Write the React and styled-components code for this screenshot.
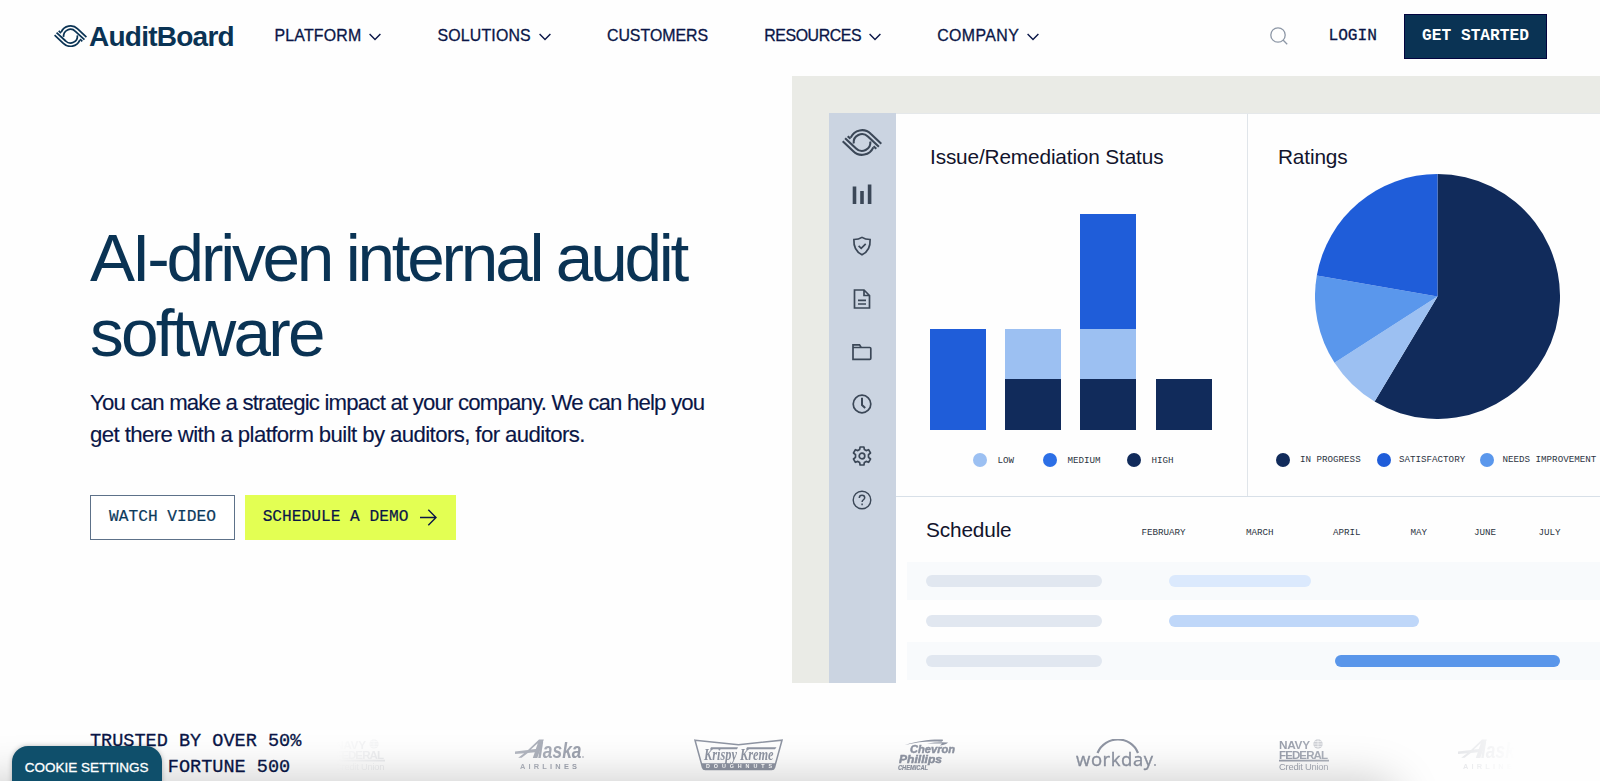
import React from 'react';
import styled, { createGlobalStyle } from 'styled-components';

const SANS = '"Liberation Sans", Arial, sans-serif';
const MONO = '"Liberation Mono", "Courier New", monospace';
const NAVY = '#0a1647';
const TEAL = '#0a3354';

const GlobalStyle = createGlobalStyle`
  *, *::before, *::after { box-sizing: border-box; }
  body {
    margin: 0;
    background: #fefefe;
    font-family: ${SANS};
    color: ${NAVY};
    overflow: hidden;
  }
  svg { display: block; flex: none; }
`;

const Page = styled.div`
  position: relative;
  display: flex;
  flex-direction: column;
  width: 1600px;
  height: 781px;
  overflow: hidden;
`;

/* ---------- Header ---------- */

const Header = styled.header`
  display: flex;
  align-items: center;
  height: 76px;
  padding: 0 53px 4px 54px;
`;

const Brand = styled.a`
  display: flex;
  align-items: center;
  gap: 2px;
  width: 220.5px;
  color: ${TEAL};
`;

const BrandName = styled.span`
  padding-top: 1px;
  font-size: 28px;
  line-height: 32px;
  font-weight: 700;
  letter-spacing: -0.75px;
`;

const Nav = styled.nav`
  display: flex;
  align-items: center;
  gap: 56px;
`;

const NavItem = styled.a`
  display: flex;
  align-items: center;
  gap: 8px;
  font-size: 15.9px;
  line-height: 20px;
  letter-spacing: ${(p) => p.$tracking}px;
  white-space: nowrap;
  -webkit-text-stroke: 0.3px ${NAVY};
`;

const HeaderActions = styled.div`
  display: flex;
  align-items: center;
  margin-left: auto;
`;

const Login = styled.a`
  margin: 0 27px 0 40px;
  font-family: ${MONO};
  font-size: 16.2px;
  -webkit-text-stroke: 0.3px ${NAVY};
`;

const Button = styled.a`
  display: flex;
  align-items: center;
  justify-content: center;
  gap: 12px;
  height: 45px;
  width: ${(p) => p.$width}px;
  font-family: ${MONO};
  font-size: 16.2px;
  white-space: nowrap;
  font-weight: ${(p) => (p.$kind === 'solid' ? 700 : 400)};
  color: ${(p) => ({ solid: '#fff', outline: '#0c3a5c', accent: NAVY })[p.$kind]};
  background: ${(p) => ({ solid: TEAL, outline: '#fff', accent: '#e3ff53' })[p.$kind]};
  border: 1px solid ${(p) => ({ solid: '#03043f', outline: '#5d7189', accent: '#e3ff53' })[p.$kind]};
  -webkit-text-stroke: ${(p) => (p.$kind === 'solid' ? 0 : 0.2)}px currentColor;
`;

/* ---------- Hero ---------- */

const Hero = styled.section`
  display: flex;
  height: 607px;
`;

const HeroCopy = styled.div`
  width: 792px;
  padding: 145px 0 0 90px;
`;

const Title = styled.h1`
  margin: 0;
  font-size: 67.5px;
  line-height: 74.5px;
  font-weight: 400;
  color: ${TEAL};
`;

const TitleLine = styled.span`
  display: block;
  letter-spacing: ${(p) => p.$tracking}px;
  word-spacing: -1px;
`;

const Lead = styled.p`
  margin: 17px 0 0;
  font-size: 22.2px;
  line-height: 31.6px;
  -webkit-text-stroke: 0.15px ${NAVY};
`;

const LeadLine = styled.span`
  display: block;
  letter-spacing: ${(p) => p.$tracking}px;
`;

const ButtonRow = styled.div`
  display: flex;
  gap: 9.5px;
  margin-top: 44.5px;
`;

/* ---------- Product preview ---------- */

const Preview = styled.div`
  flex: 1;
  display: flex;
  padding: 37px 0 0 36.5px;
  background: #eaebe6;
`;

const Sidebar = styled.aside`
  display: flex;
  flex-direction: column;
  align-items: center;
  width: 67.5px;
  padding-top: 15.5px;
  background: #cbd4e1;
  color: #3b4757;
`;

const SideIcon = styled.span`
  display: flex;
  align-items: center;
  justify-content: center;
  height: 20px;
  margin-top: ${(p) => p.$gap}px;
`;

const Main = styled.div`
  flex: 1;
  display: flex;
  flex-direction: column;
  min-width: 0;
  background: #fefefe;
`;

const Charts = styled.div`
  display: flex;
  height: 384px;
  border-top: 1px solid #e5e8ea;
  border-bottom: 1px solid #d8e0e8;
`;

const ChartPanel = styled.div`
  width: ${(p) => p.$width}px;
  padding-top: 31px;
  border-right: ${(p) => (p.$divided ? '1px solid #e0e5ea' : '0')};
`;

const PanelTitle = styled.h2`
  margin: 0 0 0 ${(p) => p.$indent || 0}px;
  font-size: 20.8px;
  line-height: 24px;
  font-weight: 400;
  letter-spacing: -0.15px;
  color: #12142c;
`;

const Bars = styled.div`
  display: flex;
  align-items: flex-end;
  gap: 19.2px;
  height: 216px;
  margin: 44.5px 0 0 34px;
`;

const Bar = styled.div`
  width: 56px;
`;

const Segment = styled.div`
  height: ${(p) => p.$height}px;
  background: ${(p) => p.$color};
`;

const Legend = styled.div`
  display: flex;
  align-items: center;
  height: 14px;
  margin: ${(p) => p.$top}px 0 0 ${(p) => p.$left}px;
`;

const LegendItem = styled.span`
  display: flex;
  align-items: center;
  gap: ${(p) => p.$gap}px;
  width: ${(p) => p.$width}px;
  white-space: nowrap;
  font-family: ${MONO};
  font-size: 9.2px;
  color: #2c3442;

  &::before {
    content: '';
    flex: none;
    width: 14px;
    height: 14px;
    border-radius: 50%;
    background: ${(p) => p.$color};
  }
`;

const PieWrap = styled.div`
  margin: 4.5px 0 0 67.5px;
`;

const Schedule = styled.div`
  flex: 1;
  padding: 19.5px 0 0 11px;
`;

const ScheduleHead = styled.div`
  display: flex;
  align-items: center;
  height: 45.5px;
  padding: 0 0 19px 19px;
`;

const ScheduleTitle = styled(PanelTitle)`
  width: 215.5px;
`;

const Month = styled.span`
  width: ${(p) => p.$width}px;
  padding-top: 5px;
  font-family: ${MONO};
  font-size: 9.2px;
  color: #2c3442;
`;

const ScheduleRow = styled.div`
  display: flex;
  align-items: center;
  height: ${(p) => (p.$shaded ? 38 : 42)}px;
  padding-left: 19px;
  background: ${(p) => (p.$shaded ? '#f8fafc' : 'transparent')};
`;

const Pill = styled.span`
  flex: none;
  width: ${(p) => p.$width}px;
  height: 12px;
  margin-left: ${(p) => p.$offset || 0}px;
  border-radius: 6px;
  background: ${(p) => p.$color};
`;

/* ---------- Customers ---------- */

const Trust = styled.section`
  display: flex;
  flex: 1;
  padding: 45px 0 0 90px;
`;

const TrustText = styled.p`
  width: 235px;
  margin: 0;
  padding-top: 1px;
  font-family: ${MONO};
  font-size: 18.55px;
  line-height: 26px;
  white-space: pre-line;
  -webkit-text-stroke: 0.3px ${NAVY};
`;

const LogoStrip = styled.div`
  width: 1190px;
  height: 53px;
  overflow: hidden;
  color: #8f95a3;
  mask-image: linear-gradient(90deg, transparent 1%, #000 24%, #000 78%, transparent 100%);
`;

const LogoTrack = styled.div`
  display: flex;
  margin-left: -58px;
`;

const LogoSlot = styled.div`
  display: flex;
  flex: none;
  justify-content: center;
  width: 188.7px;
  padding-top: 10.5px;
`;

const BottomShade = styled.div`
  position: absolute;
  left: -30px;
  top: 783px;
  width: 1425px;
  height: 60px;
  border-radius: 20px;
  box-shadow: 0 0 46px 2px rgba(0, 0, 0, 0.22);
`;

const CookieTab = styled.button`
  position: absolute;
  left: 12px;
  top: 746px;
  width: 149.5px;
  height: 44px;
  padding: 0 0 2px;
  border: 0;
  border-radius: 16px 16px 0 0;
  background: #0f4f6b;
  color: #fff;
  font-family: ${SANS};
  font-size: 13.5px;
  white-space: nowrap;
  -webkit-text-stroke: 0.3px #fff;
  box-shadow: 0 0 5px rgba(0, 0, 0, 0.25);
`;

/* ---------- Drawings ---------- */

const Mark = ({ width }) => (
  <svg width={width} height={width * 0.675} viewBox="0 0 40 27" fill="none" stroke="currentColor" strokeWidth="2.1">
    {[0, 180].map((turn) => (
      <g key={turn} transform={`rotate(${turn} 20 13.5)`}>
        <path d="M8.7 8.7A12.3 12.3 0 0 1 28.7 4.8L39.3 14.8" />
        <path d="M11.7 14.5A8.35 8.35 0 0 1 25.9 7.6L36.9 17.8" />
        <path d="M31.500 17.200l2.800 2.600" />
      </g>
    ))}
  </svg>
);

const Chevron = () => (
  <svg width="12" height="8" viewBox="0 0 12 8" fill="none" stroke={NAVY} strokeWidth="1.4" transform="translate(0 1)">
    <path d="M.6 1L6 6.6 11.4 1" />
  </svg>
);

const SearchIcon = () => (
  <svg width="18" height="18" viewBox="0 0 18 18" fill="none" stroke="#8d97a6" strokeWidth="1.3">
    <circle cx="8" cy="8" r="7.2" />
    <path d="M13 13l4.2 4.2" />
  </svg>
);

const Arrow = () => (
  <svg width="17" height="17" viewBox="0 0 17 17" fill="none" stroke={NAVY} strokeWidth="1.4">
    <path d="M0 8.5h16M8.3.8L16 8.5l-7.7 7.7" />
  </svg>
);

const Glyph = ({ children }) => (
  <svg width="20" height="20" viewBox="0 0 20 20" fill="none" stroke="currentColor" strokeWidth="1.7">
    {children}
  </svg>
);

const sideIcons = [
  { gap: 28.5, art: <path d="M2.5 2.5V20M10 7v13M17.6.6V20" strokeWidth="3.6" /> },
  { gap: 32, art: <path d="M10 1.4C7.5 3 4.5 3.5 1.9 3.5c-.4 7 2.3 12.5 8.100 15.300 5.800-2.800 8.500-8.300 8.100-15.300-2.600 0-5.600-.5-8.100-2.100zM6.600 9.800l2.600 2.500 4.500-4.500" /> },
  { gap: 32.5, art: <path d="M2.5 1h9.500l5.500 5.500V19h-15zM12 1v5.500h5.500M6 11.300h8M6 15h8" /> },
  { gap: 33, art: <path d="M1 17.300V2.800h6.500l1.700 2.700h8.600q1 0 1 1v9.800q0 1-1 1zM1 5.500h8.500" /> },
  { gap: 32, art: <><circle cx="10" cy="10" r="8.8" /><path d="M10 3.800V11l3.200 2.900" strokeWidth="2" /></> },
  {
    gap: 32.5,
    art: (
      <>
        <circle cx="10" cy="10" r="2.8" />
        <path
          strokeLinejoin="round"
          d="M8.100 1h3.800l.5 2.600 1.700 1 2.500-.9 1.900 3.300-2 1.700v2.600l2 1.700-1.900 3.300-2.500-.9-1.700 1-.5 2.600H8.100l-.5-2.600-1.700-1-2.500.9L1.500 13l2-1.700V8.700l-2-1.700 1.900-3.300 2.500.9 1.700-1z"
        />
      </>
    ),
  },
  {
    gap: 23.5,
    art: (
      <>
        <circle cx="10" cy="10" r="8.8" strokeWidth="1.4" />
        <path d="M7.300 8c0-1.700 1.200-2.700 2.700-2.700s2.700 1 2.700 2.500c0 2-2.600 2-2.600 4.200M10.100 13.600v1.600" strokeWidth="1.500" />
      </>
    ),
  },
];

const BLUE = '#1f5dd9';
const LIGHT = '#9cc0f2';
const MID = '#5a97ec';
const DARK = '#112b5b';

const bars = [
  [[101, BLUE]],
  [[50.5, LIGHT], [50.5, DARK]],
  [[115, BLUE], [50.5, LIGHT], [50.5, DARK]],
  [[50.5, DARK]],
];

const slices = [
  [0, 210.9, DARK],
  [210.9, 237.2, LIGHT],
  [237.2, 279.9, MID],
  [279.9, 360, BLUE],
];

const onCircle = (deg, r, c) => {
  const a = (deg * Math.PI) / 180;
  return `${(c + r * Math.sin(a)).toFixed(2)} ${(c - r * Math.cos(a)).toFixed(2)}`;
};

const Pie = () => (
  <svg width="245" height="245" viewBox="0 0 245 245">
    {slices.map(([from, to, color]) => (
      <path
        key={color}
        fill={color}
        d={`M122.5 122.5L${onCircle(from, 122.5, 122.5)}A122.5 122.5 0 ${to - from > 180 ? 1 : 0} 1 ${onCircle(to, 122.5, 122.5)}Z`}
      />
    ))}
  </svg>
);

const months = [
  ['FEBRUARY', 104.5],
  ['MARCH', 87],
  ['APRIL', 77.5],
  ['MAY', 63.5],
  ['JUNE', 64.5],
  ['JULY', 30],
];

const tasks = [
  { offset: 66.5, width: 142, color: '#dbe9fd', shaded: true },
  { offset: 66.5, width: 250, color: '#bfd7f9', shaded: false },
  { offset: 232.5, width: 225.5, color: '#5a96ea', shaded: true },
];

const NavyFederal = () => (
  <svg width="52" height="33" viewBox="0 0 52 33" fill="currentColor" fontFamily={SANS}>
    <text x="0" y="9.8" fontSize="11.8" fontWeight="700" textLength="31">NAVY</text>
    <text x="0" y="19.6" fontSize="11.5" fontWeight="700" textLength="49">FEDERAL</text>
    <circle cx="39" cy="5" r="4.7" opacity=".55" />
    <path d="M34.4 5h9.2M35.5 2.5h7M35.5 7.5h7M39 .5v9" stroke="#fff" strokeWidth=".6" />
    <path d="M0 20.8h50v1.800H0z" />
    <text x="0" y="31" fontSize="9.4" textLength="49.5">Credit Union</text>
  </svg>
);

const Alaska = () => (
  <svg width="72" height="33" viewBox="0 0 72 33" fill="currentColor" fontFamily={SANS}>
    <path d="M1 12.500l13-1.600L25 .6h4.800L23.300 19h-4.500l2-5.800-7 .9-6.200 4.600H4.200l6-4.500-9.200.9z M16.800 10.600l5-.7 2-5.700z" fillRule="evenodd" />
    <text x="24" y="18.700" fontSize="21.500" fontWeight="700" fontStyle="italic" textLength="43.500" lengthAdjust="spacingAndGlyphs">laska</text>
    <circle cx="69" cy="18" r=".8" />
    <text x="6" y="30.400" fontSize="7.400" fontWeight="700" textLength="57">AIRLINES</text>
  </svg>
);

const KrispyKreme = () => (
  <svg width="89" height="33" viewBox="0 0 89 33" fill="currentColor">
    <path d="M1 1.200l43.500 4.600L88 1.200 80.500 28.500q-.6 2-2.800 2H11.300q-2.200 0-2.800-2z" fill="none" stroke="currentColor" strokeWidth="1.500" />
    <path d="M7.400 24.200h74.200l-1.800 5.400q-.4 1-1.600 1H10.800q-1.200 0-1.600-1z" />
    <path d="M17 8.300h27l-1 1.900H16zM53 8.300h29.500l-1.500 1.900H52z" />
    <text x="10" y="20.800" fontFamily='"Liberation Serif", serif' fontSize="16.500" fontWeight="700" fontStyle="italic" textLength="69.500" lengthAdjust="spacingAndGlyphs">Krispy Kreme</text>
    <text x="12" y="29.400" fontFamily={SANS} fontSize="5.400" fontWeight="700" fill="#fff" textLength="66">DOUGHNUTS</text>
  </svg>
);

const ChevronPhillips = () => (
  <svg width="60" height="33" viewBox="0 0 60 33" fill="currentColor" fontFamily={SANS} fontWeight="700" fontStyle="italic" stroke="currentColor" strokeWidth=".45">
    <path d="M8 6C19 1.800 35 0 45.500.5q1.500.7-1 2.300C32 2 21 2.800 8 6z" stroke="none" />
    <path d="M30 4.500q12-2 21-1-1.500 2.200-8 3l2-2z" stroke="none" />
    <text x="13" y="14.200" fontSize="10.800" textLength="45" lengthAdjust="spacingAndGlyphs">Chevron</text>
    <text x="2" y="23.900" fontSize="10.800" textLength="43" lengthAdjust="spacingAndGlyphs">Phillips</text>
    <text x="1" y="30.800" fontSize="6.600" textLength="30" lengthAdjust="spacingAndGlyphs" strokeWidth=".2">CHEMICAL</text>
  </svg>
);

const Workday = () => (
  <svg width="80" height="33" viewBox="0 0 80 33" fill="currentColor">
    <path d="M21.500 14C29-4 55-4 62 14" fill="none" stroke="currentColor" strokeWidth="2.200" />
    <text x="0" y="27" fontFamily='"Open Sans", sans-serif' fontSize="18.500" fontWeight="400" stroke="currentColor" strokeWidth=".35" textLength="77">workday</text>
    <circle cx="79" cy="26" r=".9" />
  </svg>
);

const customerLogos = [NavyFederal, Alaska, KrispyKreme, ChevronPhillips, Workday, NavyFederal, Alaska];

const navItems = [
  { label: 'PLATFORM', tracking: 0.2, hasMenu: true },
  { label: 'SOLUTIONS', tracking: 0.18, hasMenu: true },
  { label: 'CUSTOMERS', tracking: 0, hasMenu: false },
  { label: 'RESOURCES', tracking: -0.4, hasMenu: true },
  { label: 'COMPANY', tracking: 0.4, hasMenu: true },
];

export default function App() {
  return (
    <Page>
      <GlobalStyle />
      <Header>
        <Brand>
          <Mark width={33} />
          <BrandName>AuditBoard</BrandName>
        </Brand>
        <Nav>
          {navItems.map(({ label, tracking, hasMenu }) => (
            <NavItem key={label} $tracking={tracking}>
              {label}
              {hasMenu && <Chevron />}
            </NavItem>
          ))}
        </Nav>
        <HeaderActions>
          <SearchIcon />
          <Login>LOGIN</Login>
          <Button $kind="solid" $width={143}>GET STARTED</Button>
        </HeaderActions>
      </Header>

      <Hero>
        <HeroCopy>
          <Title>
            <TitleLine $tracking={-3.22}>AI-driven internal audit</TitleLine>
            <TitleLine $tracking={-2.8}>software</TitleLine>
          </Title>
          <Lead>
            <LeadLine $tracking={-0.8}>You can make a strategic impact at your company. We can help you</LeadLine>
            <LeadLine $tracking={-0.59}>get there with a platform built by auditors, for auditors.</LeadLine>
          </Lead>
          <ButtonRow>
            <Button $kind="outline" $width={145}>WATCH VIDEO</Button>
            <Button $kind="accent" $width={211}>SCHEDULE A DEMO<Arrow /></Button>
          </ButtonRow>
        </HeroCopy>

        <Preview>
          <Sidebar>
            <Mark width={40} />
            {sideIcons.map(({ gap, art }, i) => (
              <SideIcon key={i} $gap={gap}><Glyph>{art}</Glyph></SideIcon>
            ))}
          </Sidebar>
          <Main>
            <Charts>
              <ChartPanel $width={351.5} $divided>
                <PanelTitle $indent={34}>Issue/Remediation Status</PanelTitle>
                <Bars>
                  {bars.map((segments, i) => (
                    <Bar key={i}>
                      {segments.map(([height, color]) => (
                        <Segment key={color} $height={height} $color={color} />
                      ))}
                    </Bar>
                  ))}
                </Bars>
                <Legend $top={23.5} $left={77}>
                  <LegendItem $color={LIGHT} $gap={10.5} $width={70}>LOW</LegendItem>
                  <LegendItem $color="#2c6fe6" $gap={10.5} $width={84}>MEDIUM</LegendItem>
                  <LegendItem $color={DARK} $gap={10.5} $width={50}>HIGH</LegendItem>
                </Legend>
              </ChartPanel>
              <ChartPanel $width={352.5}>
                <PanelTitle $indent={30.5}>Ratings</PanelTitle>
                <PieWrap><Pie /></PieWrap>
                <Legend $top={34} $left={28}>
                  <LegendItem $color={DARK} $gap={10.5} $width={101.5}>IN PROGRESS</LegendItem>
                  <LegendItem $color={BLUE} $gap={8} $width={102.5}>SATISFACTORY</LegendItem>
                  <LegendItem $color={MID} $gap={9} $width={118}>NEEDS IMPROVEMENT</LegendItem>
                </Legend>
              </ChartPanel>
            </Charts>
            <Schedule>
              <ScheduleHead>
                <ScheduleTitle>Schedule</ScheduleTitle>
                {months.map(([name, width]) => (
                  <Month key={name} $width={width}>{name}</Month>
                ))}
              </ScheduleHead>
              {tasks.map((task) => (
                <ScheduleRow key={task.color} $shaded={task.shaded}>
                  <Pill $width={176} $color="#e1e7f0" />
                  <Pill $width={task.width} $offset={task.offset} $color={task.color} />
                </ScheduleRow>
              ))}
            </Schedule>
          </Main>
        </Preview>
      </Hero>

      <Trust>
        <TrustText>{'TRUSTED BY OVER 50%\nOF THE FORTUNE 500'}</TrustText>
        <LogoStrip>
          <LogoTrack>
            {customerLogos.map((Logo, i) => (
              <LogoSlot key={i}><Logo /></LogoSlot>
            ))}
          </LogoTrack>
        </LogoStrip>
      </Trust>

      <BottomShade />
      <CookieTab>COOKIE SETTINGS</CookieTab>
    </Page>
  );
}
